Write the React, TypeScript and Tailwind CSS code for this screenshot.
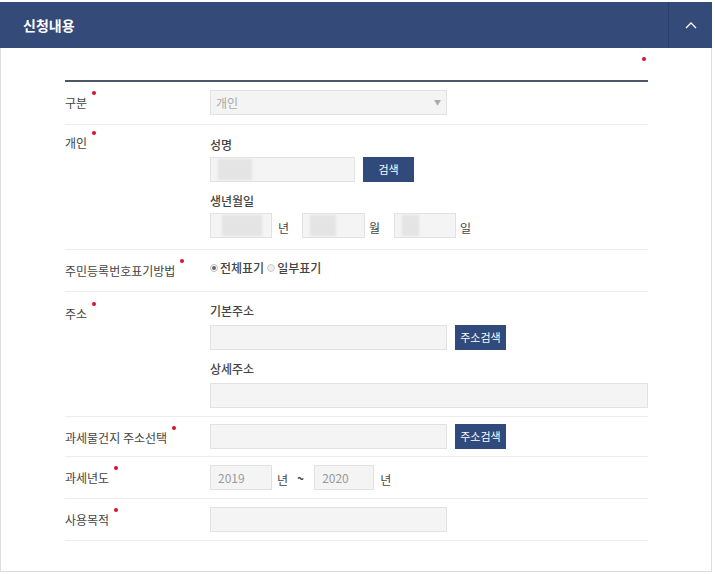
import React from "react";

const font = { fontFamily: '"Noto Sans CJK KR", "Noto Sans", sans-serif' };

function Req({ children }: { children: React.ReactNode }) {
  return (
    <span className="inline-flex items-start">
      <span>{children}</span>
      <span className="ml-[5px] mt-[-3px] inline-block h-[4px] w-[4px] rounded-full bg-[#d3142e]" />
    </span>
  );
}

function Field({ w, children }: { w: string; children?: React.ReactNode }) {
  return (
    <div className={`${w} flex h-[25px] items-center border border-[#e2e2e2] bg-[#f4f4f4] px-[7px] text-[12px] text-[#999]`}>
      {children}
    </div>
  );
}

function Blur({ w }: { w: string }) {
  return <div className={`${w} h-[21px] bg-[#e4e4e4] blur-[1px]`} />;
}

function Btn({ children, w }: { children: React.ReactNode; w: string }) {
  return (
    <button className={`${w} h-[25px] bg-[#2f4a7b] text-[11px] text-white`}>{children}</button>
  );
}

function Row({ label, labelPt, children, cls }: { label: string; labelPt: string; children: React.ReactNode; cls: string }) {
  return (
    <div className="flex items-start border-b border-[#ececec]">
      <div className={`w-[145px] shrink-0 text-[12px] leading-[18px] text-[#444] ${labelPt}`}>
        <Req>{label}</Req>
      </div>
      <div className={`flex-1 ${cls}`}>{children}</div>
    </div>
  );
}

function Sub({ children }: { children: React.ReactNode }) {
  return <div className="h-[18px] text-[12px] font-medium leading-[18px] text-[#444]">{children}</div>;
}

function Unit({ children }: { children: React.ReactNode }) {
  return <span className="text-[12px] text-[#444]">{children}</span>;
}

export default function App() {
  return (
    <div className="h-[574px] w-[715px] bg-white" style={font}>
      <div className="w-[712px] pt-[2px]">
        <div className="flex h-[46px] items-center bg-[#344a79]">
          <div className="flex-1 pl-[23px] text-[14px] font-bold text-white">신청내용</div>
          <div className="flex h-full w-[44px] items-center justify-center border-l border-[#2b3f6a]">
            <svg width="12" height="8" viewBox="0 0 12 8" fill="none">
              <path d="M1 7L6 2L11 7" stroke="white" strokeWidth="1.3" />
            </svg>
          </div>
        </div>
        <div className="h-[524px] border-x border-b border-[#dcdcdc] pl-[64px] pr-[63px]">
          <div className="flex h-[32px] justify-end pt-[9px] pr-[2px]">
            <span className="h-[4px] w-[4px] rounded-full bg-[#d3142e]" />
          </div>
          <div className="h-[2px] bg-[#4d5566]" />

          <Row label="구분" labelPt="pt-[12px]" cls="pt-[8px] pb-[9px]">
            <div className="flex h-[25px] w-[237px] items-center justify-between border border-[#e2e2e2] bg-[#f4f4f4] px-[5px] text-[12px] text-[#aaa]">
              <span>개인</span>
              <span className="text-[7px] text-[#aaa]">▼</span>
            </div>
          </Row>

          <Row label="개인" labelPt="pt-[9px]" cls="pt-[11px] pb-[11px]">
            <Sub>성명</Sub>
            <div className="mt-[3px] flex gap-[8px]">
              <Field w="w-[145px]">
                <Blur w="w-[34px]" />
              </Field>
              <Btn w="w-[51px]">검색</Btn>
            </div>
            <div className="mt-[10px]">
              <Sub>생년월일</Sub>
            </div>
            <div className="mt-[3px] flex items-center">
              <Field w="w-[62px]">
                <div className="ml-[4px]"><Blur w="w-[40px]" /></div>
              </Field>
              <span className="ml-[6px] mr-[13px]"><Unit>년</Unit></span>
              <Field w="w-[63px]">
                <Blur w="w-[26px]" />
              </Field>
              <span className="ml-[4px] mr-[14px]"><Unit>월</Unit></span>
              <Field w="w-[62px]">
                <Blur w="w-[17px]" />
              </Field>
              <span className="ml-[4px]"><Unit>일</Unit></span>
            </div>
          </Row>

          <Row label="주민등록번호표기방법" labelPt="pt-[12px]" cls="h-[41px]">
            <div className="flex items-center pt-[9px] text-[12px] leading-[18px] text-[#444]">
              <span className="mr-[2px] flex h-[8px] w-[8px] items-center justify-center rounded-full border border-[#bbb] bg-white">
                <span className="h-[4px] w-[4px] rounded-full bg-[#666]" />
              </span>
              <span className="font-medium">전체표기</span>
              <span className="ml-[3px] mr-[2px] h-[8px] w-[8px] rounded-full border border-[#ccc] bg-[#eee]" />
              <span className="font-medium">일부표기</span>
            </div>
          </Row>

          <Row label="주소" labelPt="pt-[13px]" cls="pt-[10px] pb-[8px]">
            <Sub>기본주소</Sub>
            <div className="mt-[5px] flex gap-[8px]">
              <Field w="w-[237px]" />
              <Btn w="w-[51px]">주소검색</Btn>
            </div>
            <div className="mt-[10px]">
              <Sub>상세주소</Sub>
            </div>
            <div className="mt-[5px]">
              <Field w="w-[438px]" />
            </div>
          </Row>

          <Row label="과세물건지 주소선택" labelPt="pt-[12px]" cls="py-[7px]">
            <div className="flex gap-[8px]">
              <Field w="w-[237px]" />
              <Btn w="w-[51px]">주소검색</Btn>
            </div>
          </Row>

          <Row label="과세년도" labelPt="pt-[12px]" cls="py-[8px]">
            <div className="flex items-center">
              <Field w="w-[62px]">2019</Field>
              <span className="ml-[5px]"><Unit>년</Unit></span>
              <span className="ml-[9px] mr-[10px] text-[12px] font-bold text-[#444]">~</span>
              <Field w="w-[60px]">2020</Field>
              <span className="ml-[6px]"><Unit>년</Unit></span>
            </div>
          </Row>

          <Row label="사용목적" labelPt="pt-[12px]" cls="py-[8px]">
            <Field w="w-[237px]" />
          </Row>
        </div>
      </div>
    </div>
  );
}
